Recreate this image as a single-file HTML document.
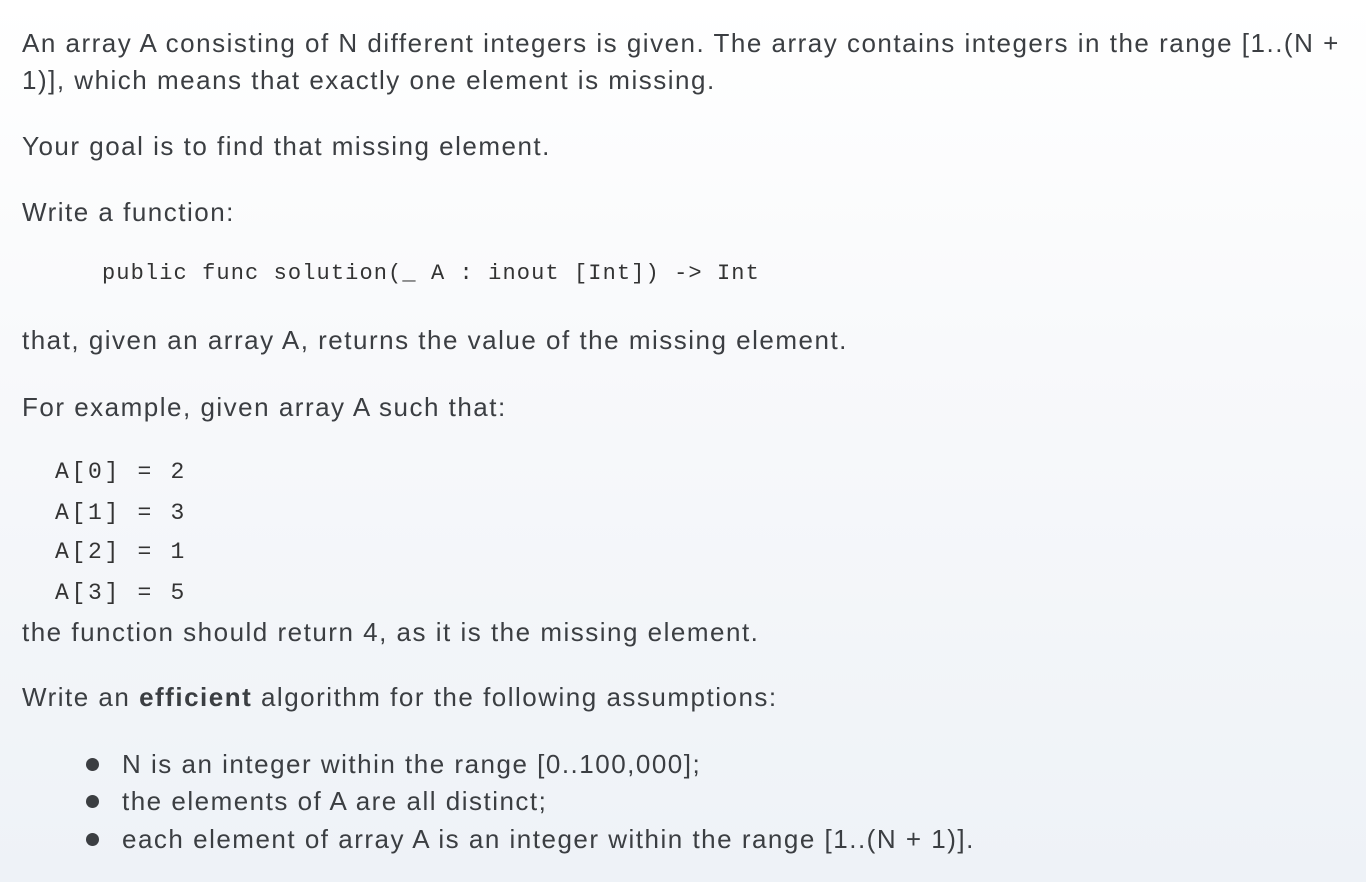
<!DOCTYPE html>
<html><head><meta charset="utf-8"><style>
html,body{margin:0;padding:0}
body{width:1366px;height:882px;overflow:hidden;position:relative;background:linear-gradient(#ffffff 0%,#f8f9fb 40%,#eef2f7 100%);color:#3b3e42;font-family:"Liberation Sans",sans-serif;font-size:26px;}
.l{position:absolute;left:22px;white-space:nowrap;line-height:36px;height:36px;letter-spacing:1.5px}
.m{position:absolute;white-space:nowrap;font-family:"Liberation Mono",monospace;color:#333;line-height:30px;font-weight:bold;-webkit-text-stroke:0}
.b{position:absolute;left:86px;width:13px;height:13px;border-radius:50%;background:#3b3e42}
</style></head><body>
<div class="l" style="top:25px">An array A consisting of N different integers is given. The array contains integers in the range [1..(N +</div>
<div class="l" style="top:62px">1)], which means that exactly one element is missing.</div>
<div class="l" style="top:128px">Your goal is to find that missing element.</div>
<div class="l" style="top:194px">Write a function:</div>
<div class="m" style="left:102px;top:259px;font-size:22px;letter-spacing:1.1px;font-weight:normal">public func solution(_ A : inout [Int]) -&gt; Int</div>
<div class="l" style="top:322px">that, given an array A, returns the value of the missing element.</div>
<div class="l" style="top:389px">For example, given array A such that:</div>
<div class="m" style="left:55px;top:457px;font-size:23px;letter-spacing:2.7px;font-weight:normal">A[0] = 2</div>
<div class="m" style="left:55px;top:498px;font-size:23px;letter-spacing:2.7px;font-weight:normal">A[1] = 3</div>
<div class="m" style="left:55px;top:537px;font-size:23px;letter-spacing:2.7px;font-weight:normal">A[2] = 1</div>
<div class="m" style="left:55px;top:578px;font-size:23px;letter-spacing:2.7px;font-weight:normal">A[3] = 5</div>
<div class="l" style="top:614px">the function should return 4, as it is the missing element.</div>
<div class="l" style="top:679px">Write an <b>efficient</b> algorithm for the following assumptions:</div>
<div class="b" style="top:758px"></div>
<div class="l" style="left:122px;top:746px">N is an integer within the range [0..100,000];</div>
<div class="b" style="top:795px"></div>
<div class="l" style="left:122px;top:783px">the elements of A are all distinct;</div>
<div class="b" style="top:833px"></div>
<div class="l" style="left:122px;top:821px">each element of array A is an integer within the range [1..(N + 1)].</div>
</body></html>
